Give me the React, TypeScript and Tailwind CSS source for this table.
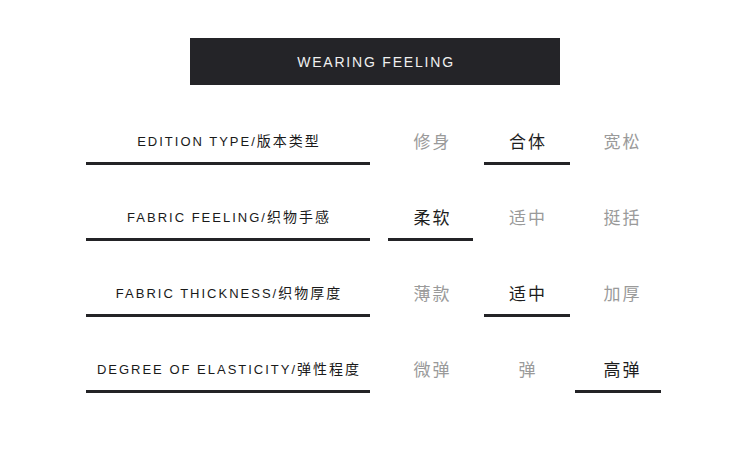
import React from "react";

type Row = { en: string; zh: string; options: string[]; selected: number };

const rows: Row[] = [
  { en: "EDITION TYPE/", zh: "版本类型", options: ["修身", "合体", "宽松"], selected: 1 },
  { en: "FABRIC FEELING/", zh: "织物手感", options: ["柔软", "适中", "挺括"], selected: 0 },
  { en: "FABRIC THICKNESS/", zh: "织物厚度", options: ["薄款", "适中", "加厚"], selected: 1 },
  { en: "DEGREE OF ELASTICITY/", zh: "弹性程度", options: ["微弹", "弹", "高弹"], selected: 2 },
];

const colCls = [
  "ml-[18px] w-[85px] pl-[2px]",
  "ml-[11px] w-[86px]",
  "ml-[5px] w-[86px] pl-[7px]",
];

export default function App() {
  return (
    <div
      className="w-[750px] h-[474px] bg-white overflow-hidden"
      style={{ fontFamily: '"Liberation Sans", "Noto Sans CJK SC", sans-serif' }}
    >
      <div className="mx-auto mt-[38px] w-[370px] h-[47px] bg-[#242428] flex items-center justify-center">
        <span className="text-[14px] tracking-[1.8px] text-[#f0f0f0] pl-[2px] mt-[1px]">WEARING FEELING</span>
      </div>
      <div className="mt-[37px] flex flex-col gap-[33px]">
        {rows.map((r) => (
          <div key={r.en} className="flex">
            <div className="ml-[86px] w-[284px] h-[43px] border-b-[3px] border-[#232326] flex items-center justify-center text-[#1a1a1a] pl-[2px]">
              <p className="leading-[20px] whitespace-nowrap -mt-[2px]">
                <span className="text-[13px] tracking-[2px]">{r.en}</span>
                <span className="text-[14px] tracking-[2px]" style={{ fontFamily: '"Noto Sans CJK SC", sans-serif' }}>
                  {r.zh}
                </span>
              </p>
            </div>
            {r.options.map((o, i) => (
              <div
                key={o + i}
                className={`${colCls[i]} h-[43px] flex items-center justify-center border-b-[3px] ${
                  i === r.selected ? "border-[#232326] text-[#1e1e1e]" : "border-transparent text-[#9a9a9a]"
                }`}
              >
                <span
                  className="text-[17px] tracking-[2px] pl-[2px] -mt-[2px]"
                  style={{ fontFamily: '"Noto Sans CJK SC", sans-serif' }}
                >
                  {o}
                </span>
              </div>
            ))}
          </div>
        ))}
      </div>
    </div>
  );
}
